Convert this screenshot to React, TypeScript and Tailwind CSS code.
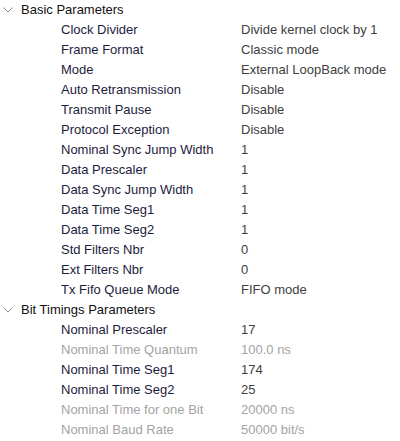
import React from 'react';

type Row = { label: string; value: string; disabled?: boolean };

const sections: { title: string; rows: Row[] }[] = [
  {
    title: 'Basic Parameters',
    rows: [
      { label: 'Clock Divider', value: 'Divide kernel clock by 1' },
      { label: 'Frame Format', value: 'Classic mode' },
      { label: 'Mode', value: 'External LoopBack mode' },
      { label: 'Auto Retransmission', value: 'Disable' },
      { label: 'Transmit Pause', value: 'Disable' },
      { label: 'Protocol Exception', value: 'Disable' },
      { label: 'Nominal Sync Jump Width', value: '1' },
      { label: 'Data Prescaler', value: '1' },
      { label: 'Data Sync Jump Width', value: '1' },
      { label: 'Data Time Seg1', value: '1' },
      { label: 'Data Time Seg2', value: '1' },
      { label: 'Std Filters Nbr', value: '0' },
      { label: 'Ext Filters Nbr', value: '0' },
      { label: 'Tx Fifo Queue Mode', value: 'FIFO mode' },
    ],
  },
  {
    title: 'Bit Timings Parameters',
    rows: [
      { label: 'Nominal Prescaler', value: '17' },
      { label: 'Nominal Time Quantum', value: '100.0 ns', disabled: true },
      { label: 'Nominal Time Seg1', value: '174' },
      { label: 'Nominal Time Seg2', value: '25' },
      { label: 'Nominal Time for one Bit', value: '20000 ns', disabled: true },
      { label: 'Nominal Baud Rate', value: '50000 bit/s', disabled: true },
    ],
  },
];

const Chevron = () => (
  <svg width="10" height="6" viewBox="0 0 10 6" className="ml-[2px] mr-[8px]">
    <path d="M0.5 0.5 L5 5 L9.5 0.5" fill="none" stroke="#8a8a8a" strokeWidth="1" />
  </svg>
);

export default function App() {
  return (
    <div className="w-[400px] h-[441px] bg-white font-['Liberation_Sans',Arial,sans-serif] text-[13px] leading-[20px] overflow-hidden">
      {sections.map((s) => (
        <div key={s.title}>
          {/* section header */}
          <div className="h-[20px] flex items-center pl-[1px] text-[#111]">
            <Chevron />
            <span>{s.title}</span>
          </div>
          {s.rows.map((r) => (
            <div key={r.label} className="h-[20px] flex items-center">
              <span className={`w-[241px] pl-[61px] shrink-0 whitespace-nowrap ${r.disabled ? 'text-[#a3a3a3]' : 'text-[#1c1c3c]'}`}>
                {r.label}
              </span>
              <span className={`whitespace-nowrap ${r.disabled ? 'text-[#a3a3a3]' : 'text-[#404040]'}`}>{r.value}</span>
            </div>
          ))}
        </div>
      ))}
    </div>
  );
}
